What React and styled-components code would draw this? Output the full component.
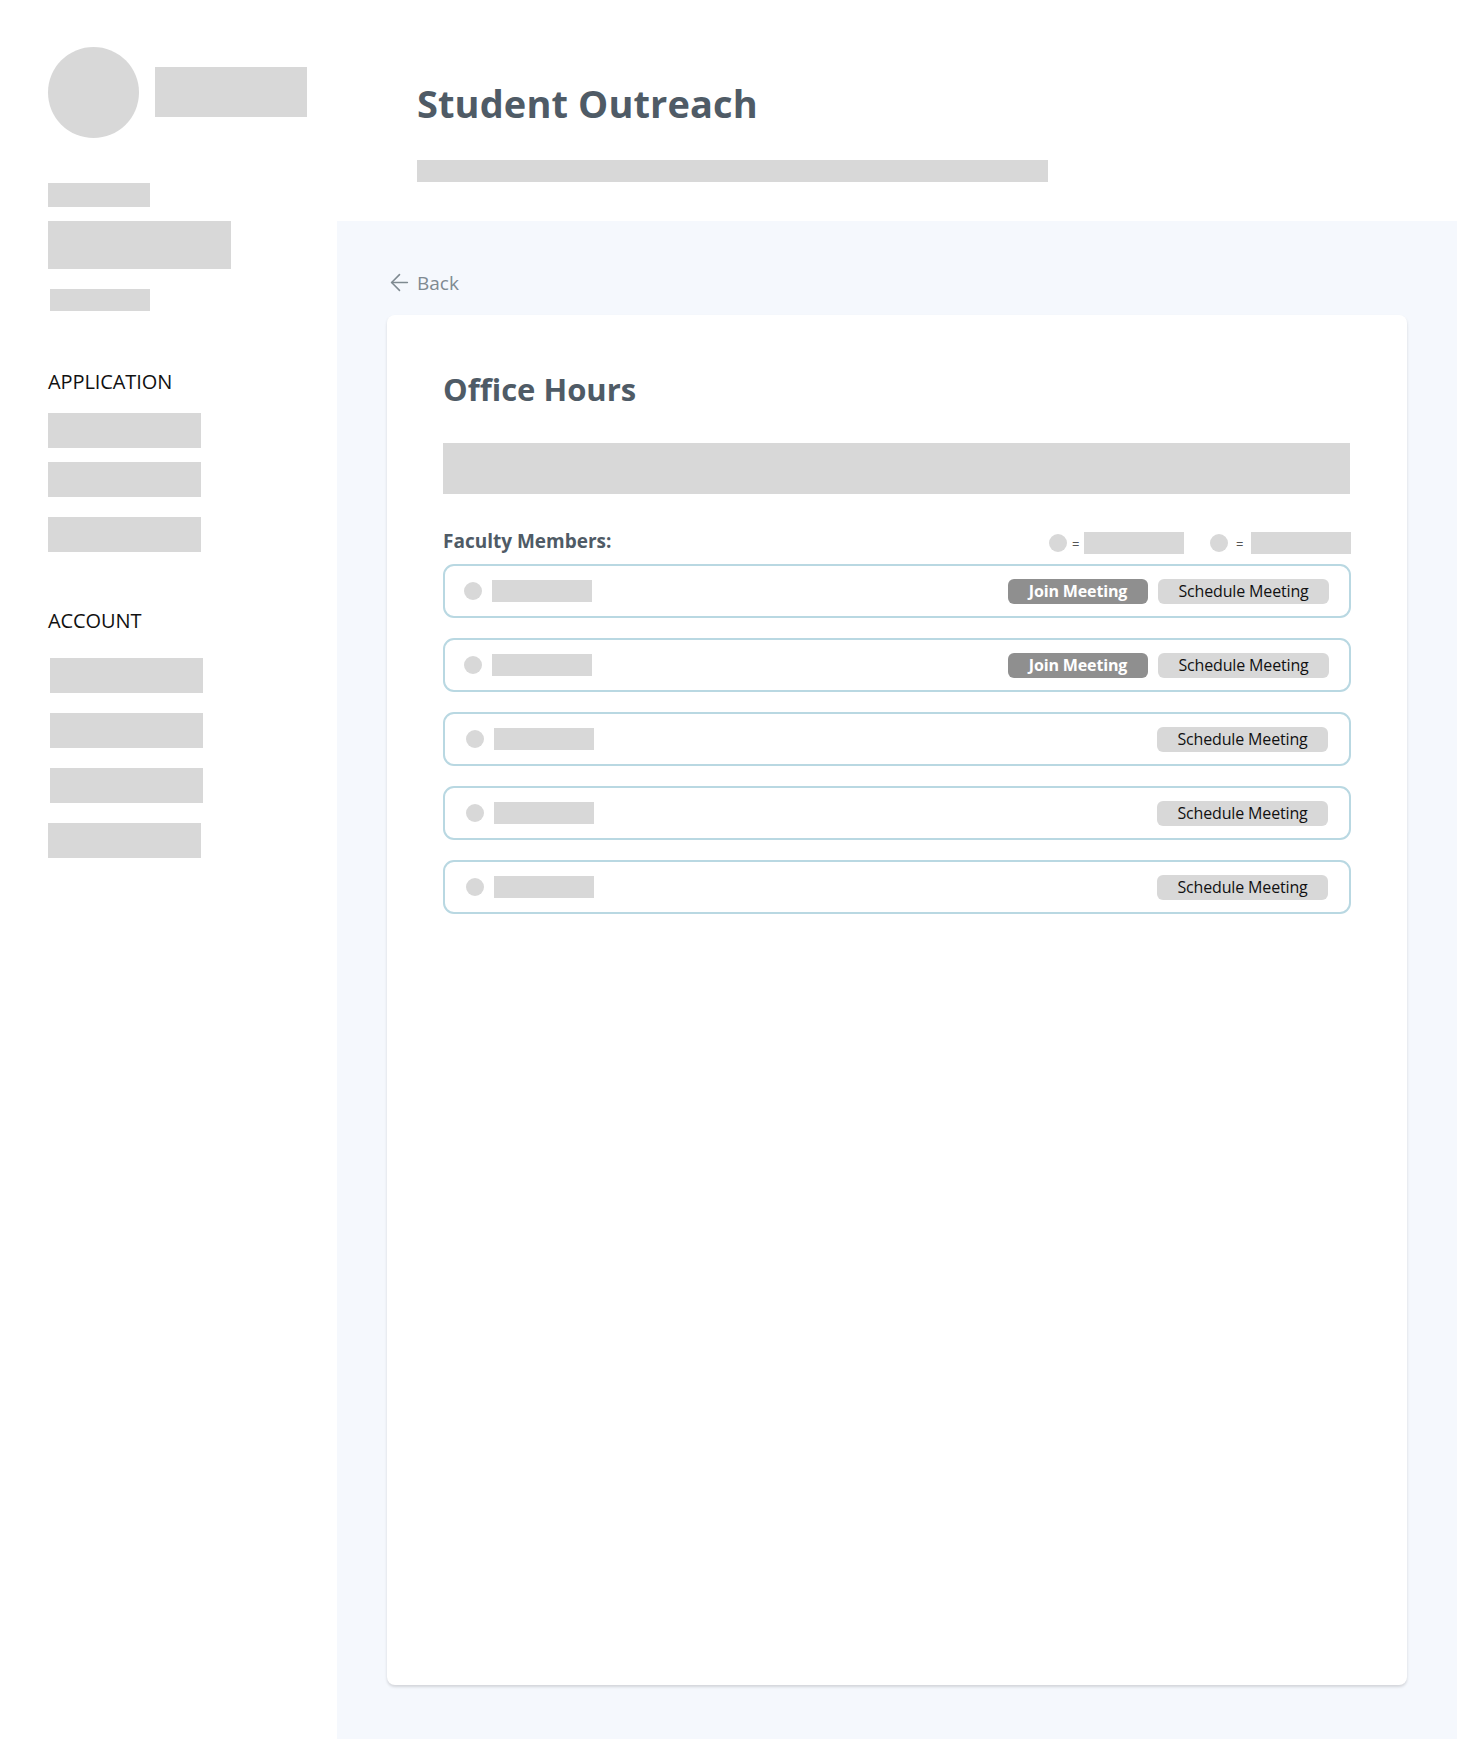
import React from "react"
import styled, { createGlobalStyle } from "styled-components"
import { ArrowLeft } from "lucide-react"

const GlobalStyle = createGlobalStyle`
html, body {
    margin: 0;
    padding: 0;
    background: white;
    font-family: "Open Sans", "Noto Sans", sans-serif;
}
* { box-sizing: border-box; }
`

const Page = styled.div`
display: flex;
width: 1457px;
height: 1739px;
overflow: hidden;
`

const Sidebar = styled.aside`
width: 337px;
flex-shrink: 0;
padding: 47px 0 0 48px;
display: flex;
flex-direction: column;
`

const Brand = styled.div`
display: flex;
align-items: flex-start;
gap: 16px;
margin-bottom: 45px;
`

const Avatar = styled.div`
width: 91px;
height: 91px;
border-radius: 50%;
background: #d8d8d8;
`

const Block = styled.div`
width: ${p => p.$w}px;
height: ${p => p.$h}px;
margin-top: ${p => p.$top || 0}px;
margin-left: ${p => p.$left || 0}px;
background: #d8d8d8;
flex-shrink: 0;
`

const SectionLabel = styled.h4`
margin: ${p => p.$top}px 0 0;
font-size: 20px;
line-height: 26px;
font-weight: 400;
letter-spacing: -0.1px;
color: #111;
`

const Main = styled.main`
flex: 1;
display: flex;
flex-direction: column;
`

const Header = styled.header`
height: 221px;
padding: 0 0 0 80px;
background: white;
`

const Title = styled.h1`
margin: 0;
padding-top: 77px;
font-size: 38px;
line-height: 52px;
font-weight: 700;
letter-spacing: 0.1px;
color: #4f5b66;
`

const Content = styled.section`
flex: 1;
background: #f5f8fd;
padding: 0 50px 54px 50px;
display: flex;
flex-direction: column;
`

const BackLink = styled.a`
display: flex;
align-items: center;
gap: 4px;
height: 94px;
padding: 29px 0 0 0;
font-size: 19px;
color: #7f8a91;
svg {
    margin-left: -1px;
    color: #7f8a91;
}
`

const Card = styled.div`
flex: 1;
background: white;
border-radius: 8px;
box-shadow: 0 2px 3px rgba(0, 0, 0, 0.14);
padding: 49px 56px 0 56px;
`

const CardTitle = styled.h2`
margin: 0 0 29px;
font-size: 31px;
line-height: 50px;
font-weight: 700;
color: #4f5b66;
`

const ListHead = styled.div`
display: flex;
align-items: center;
justify-content: space-between;
height: 34px;
margin-top: 32px;
margin-bottom: 4px;
`

const ListLabel = styled.span`
margin-bottom: 4px;
font-size: 19px;
font-weight: 700;
color: #4f5b66;
`

const Legend = styled.div`
display: flex;
align-items: center;
`

const Equals = styled.span`
width: 7px;
font-size: 13px;
color: #555;
margin: 2px ${p => p.$gap}px 0;
`

const Dot = styled.span`
width: 18px;
height: 18px;
border-radius: 50%;
background: #d8d8d8;
flex-shrink: 0;
`

const LegendDot = styled(Dot)`
margin-left: ${p => p.$left}px;
`

const Rows = styled.div`
display: flex;
flex-direction: column;
gap: 20px;
`

const Row = styled.div`
display: flex;
align-items: center;
gap: 10px;
height: 54px;
padding: 0 ${p => p.$right}px 0 ${p => p.$pad}px;
border: 2px solid #b9d8e2;
border-radius: 11px;
`

const Actions = styled.div`
display: flex;
gap: 10px;
margin-left: auto;
`

const Button = styled.button`
height: 25px;
padding: 0;
border: none;
border-radius: 6px;
font-family: inherit;
font-size: 16px;
line-height: 25px;
font-weight: ${p => (p.$primary ? 700 : 400)};
letter-spacing: -0.15px;
width: ${p => (p.$primary ? 140 : 171)}px;
background: ${p => (p.$primary ? "#8f8f8f" : "#d8d8d8")};
color: ${p => (p.$primary ? "white" : "#111")};
`

const faculty = [
    { pad: 19, right: 20, join: true },
    { pad: 19, right: 20, join: true },
    { pad: 21, right: 21 },
    { pad: 21, right: 21 },
    { pad: 21, right: 21 },
]

export default function App() {
    return (
        <Page>
            <GlobalStyle />
            <Sidebar>
                <Brand>
                    <Avatar />
                    <Block $w={152} $h={50} $top={20} />
                </Brand>
                <Block $w={102} $h={24} />
                <Block $w={183} $h={48} $top={14} />
                <Block $w={100} $h={22} $top={20} $left={2} />
                <SectionLabel $top={58}>APPLICATION</SectionLabel>
                <Block $w={153} $h={35} $top={18} />
                <Block $w={153} $h={35} $top={14} />
                <Block $w={153} $h={35} $top={20} />
                <SectionLabel $top={56}>ACCOUNT</SectionLabel>
                <Block $w={153} $h={35} $top={24} $left={2} />
                <Block $w={153} $h={35} $top={20} $left={2} />
                <Block $w={153} $h={35} $top={20} $left={2} />
                <Block $w={153} $h={35} $top={20} />
            </Sidebar>
            <Main>
                <Header>
                    <Title>Student Outreach</Title>
                    <Block $w={631} $h={22} $top={31} />
                </Header>
                <Content>
                    <BackLink>
                        <ArrowLeft size={27} strokeWidth={1.4} />
                        Back
                    </BackLink>
                    <Card>
                        <CardTitle>Office Hours</CardTitle>
                        <Block $w={907} $h={51} />
                        <ListHead>
                            <ListLabel>Faculty Members:</ListLabel>
                            <Legend>
                                <Dot />
                                <Equals $gap={5}>=</Equals>
                                <Block $w={100} $h={22} />
                                <LegendDot $left={26} />
                                <Equals $gap={8}>=</Equals>
                                <Block $w={100} $h={22} />
                            </Legend>
                        </ListHead>
                        <Rows>
                            {faculty.map((f, i) => (
                                <Row key={i} $pad={f.pad} $right={f.right}>
                                    <Dot />
                                    <Block $w={100} $h={22} />
                                    <Actions>
                                        {f.join && <Button $primary>Join Meeting</Button>}
                                        <Button>Schedule Meeting</Button>
                                    </Actions>
                                </Row>
                            ))}
                        </Rows>
                    </Card>
                </Content>
            </Main>
        </Page>
    )
}
